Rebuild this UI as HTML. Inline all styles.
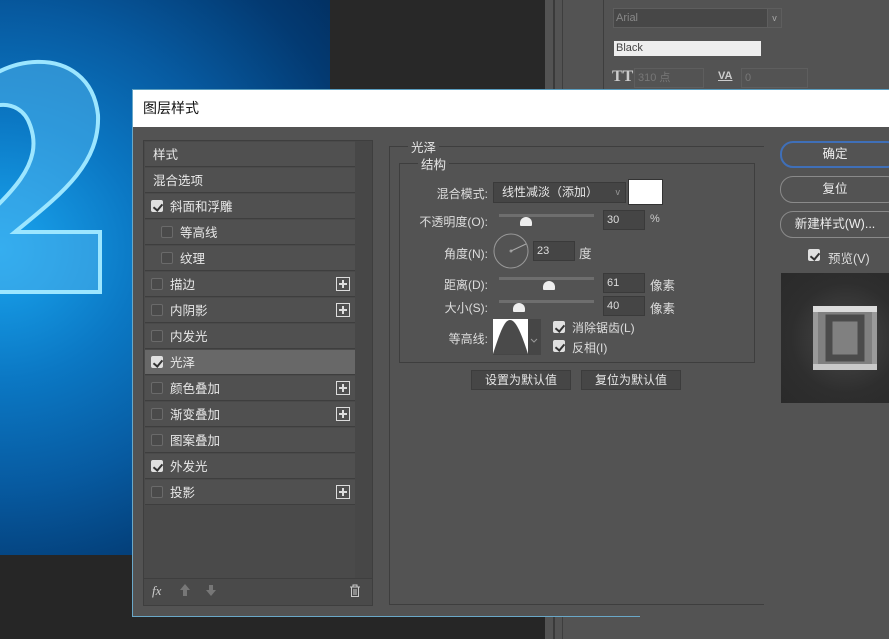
<!DOCTYPE html>
<html><head><meta charset="utf-8"><style>
*{margin:0;padding:0;box-sizing:border-box}
body{width:889px;height:639px;overflow:hidden;position:relative;background:#262626;font-family:"Liberation Sans","Noto Sans CJK SC",sans-serif;font-size:12px;color:#e6e6e6}
.a{position:absolute}
.row{position:absolute;left:145px;width:210px;height:25px;border-bottom:1px solid #3e3e3e;background:#505050;line-height:27px;font-size:12.5px;color:#e8e8e8}
.cb{position:absolute;width:12px;height:12px;border:1px solid #6a6a6a;border-radius:2px;background:#4a4a4a;top:6px}
.cb.on{background:#e0e0e0;border-color:#e0e0e0}
.cb.on:after{content:"";position:absolute;left:3px;top:1px;width:4px;height:7px;border:solid #333;border-width:0 2px 2px 0;transform:rotate(40deg)}
.plus{position:absolute;left:191px;top:5px;width:14px;height:14px;border:1px solid #ddd}
.plus:before{content:"";position:absolute;left:2px;top:5px;width:8px;height:2px;background:#ddd}
.plus:after{content:"";position:absolute;left:5px;top:2px;width:2px;height:8px;background:#ddd}
.lbl{position:absolute;text-align:right;width:90px;font-size:12px;color:#ddd}
.inp{position:absolute;background:#454545;border:1px solid #3a3a3a;color:#ddd;font-size:11px;padding-left:3px;line-height:18px;height:20px}
.sl{position:absolute;height:3px;background:#6e6e6e;width:95px;left:499px}
.th{position:absolute;width:12px;height:9px;background:#eee;border-radius:6px 6px 1px 1px}
.btn{position:absolute;left:780px;width:120px;height:27px;border:1px solid #8a8a8a;border-radius:13px;text-align:center;line-height:25px;font-size:12.5px;color:#eee;padding-right:10px}
.b2{position:absolute;height:20px;background:#464646;border:1px solid #3c3c3c;text-align:center;line-height:18px;font-size:12px;color:#e6e6e6}
</style></head><body>
<div class="a" style="left:0;top:0;width:330px;height:555px;background:radial-gradient(ellipse at 0% 45%,#1aa6f0 0%,#0b78c4 30%,#075aa0 55%,#033a72 80%,#022a58 100%)"></div>
<svg class="a" style="left:0;top:0" width="330" height="555">
<path d="M-40 110 C-10 50 90 40 98 115 C100 165 60 195 15 232 L100 232 L100 292 L-40 292 L-40 240 C10 195 45 165 30 125 C20 95 -20 100 -30 130 Z" fill="#4cb4ee" fill-opacity="0.55" stroke="#9ce6ff" stroke-width="4"/>
</svg>
<div class="a" style="left:330px;top:0;width:215px;height:555px;background:#282828"></div>
<div class="a" style="left:545px;top:0;width:344px;height:639px;background:#535353"></div>
<div class="a" style="left:553px;top:0;width:2px;height:639px;background:#3a3a3a"></div>
<div class="a" style="left:562px;top:0;width:1px;height:639px;background:#3e3e3e"></div>
<div class="a" style="left:603px;top:0;width:1px;height:89px;background:#3e3e3e"></div>
<div class="a" style="left:613px;top:8px;width:155px;height:20px;background:#474747;border:1px solid #5e5e5e;color:#888;font-size:11px;padding-left:2px;line-height:18px">Arial</div>
<div class="a" style="left:767px;top:8px;width:15px;height:20px;border:1px solid #5e5e5e;color:#aaa;font-size:9px;text-align:center;line-height:18px">v</div>
<div class="a" style="left:614px;top:41px;width:147px;height:15px;background:#eee;color:#444;font-size:11px;padding-left:2px;line-height:15px">Black</div>
<div class="a" style="left:612px;top:68px;font:bold 16px 'Liberation Serif',serif;color:#ccc">TT</div>
<div class="a" style="left:634px;top:68px;width:70px;height:20px;border:1px solid #5e5e5e;color:#777;font-size:11px;padding-left:3px;line-height:18px">310 点</div>
<div class="a" style="left:718px;top:70px;font:bold 11px 'Liberation Sans';color:#ccc;text-decoration:underline">VA</div>
<div class="a" style="left:741px;top:68px;width:67px;height:20px;border:1px solid #5e5e5e;color:#777;font-size:11px;padding-left:3px;line-height:18px">0</div>

<div class="a" style="left:132px;top:89px;width:757px;height:528px;background:#535353;border-top:1px solid #5a9ec0;border-left:1px solid #6aa8c8"></div>
<div class="a" style="left:640px;top:605px;width:249px;height:34px;background:#535353"></div>
<div class="a" style="left:133px;top:90px;width:756px;height:37px;background:#fff;color:#111;font-size:14px;line-height:37px;padding-left:10px">图层样式</div>
<div class="a" style="left:132px;top:616px;width:508px;height:1px;background:#6aa8c8"></div>

<div class="a" style="left:143px;top:140px;width:230px;height:466px;border:1px solid #3e3e3e;background:#4a4a4a"></div>
<div class="a" style="left:355px;top:141px;width:17px;height:437px;background:#474747"></div>
<div class="row" style="top:142px;padding-left:8px">样式</div>
<div class="row" style="top:168px;padding-left:8px">混合选项</div>
<div class="row" style="top:194px;padding-left:25px"><span class="cb on" style="left:6px"></span>斜面和浮雕</div>
<div class="row" style="top:220px;padding-left:35px"><span class="cb" style="left:16px"></span>等高线</div>
<div class="row" style="top:246px;padding-left:35px"><span class="cb" style="left:16px"></span>纹理</div>
<div class="row" style="top:272px;padding-left:25px"><span class="cb" style="left:6px"></span>描边<span class="plus"></span></div>
<div class="row" style="top:298px;padding-left:25px"><span class="cb" style="left:6px"></span>内阴影<span class="plus"></span></div>
<div class="row" style="top:324px;padding-left:25px"><span class="cb" style="left:6px"></span>内发光</div>
<div class="row" style="top:350px;padding-left:25px;background:#686868"><span class="cb on" style="left:6px"></span>光泽</div>
<div class="row" style="top:376px;padding-left:25px"><span class="cb" style="left:6px"></span>颜色叠加<span class="plus"></span></div>
<div class="row" style="top:402px;padding-left:25px"><span class="cb" style="left:6px"></span>渐变叠加<span class="plus"></span></div>
<div class="row" style="top:428px;padding-left:25px"><span class="cb" style="left:6px"></span>图案叠加</div>
<div class="row" style="top:454px;padding-left:25px"><span class="cb on" style="left:6px"></span>外发光</div>
<div class="row" style="top:480px;padding-left:25px"><span class="cb" style="left:6px"></span>投影<span class="plus"></span></div>
<div class="a" style="left:144px;top:578px;width:228px;height:1px;background:#3e3e3e"></div>
<div class="a" style="left:152px;top:583px;font:italic 13px 'Liberation Serif',serif;color:#ccc">fx</div>
<div class="a" style="left:180px;top:584px;width:0;height:0;border:5px solid transparent;border-bottom:6px solid #777;border-top:0"></div>
<div class="a" style="left:183px;top:590px;width:4px;height:6px;background:#777"></div>
<div class="a" style="left:209px;top:585px;width:4px;height:6px;background:#777"></div>
<div class="a" style="left:206px;top:590px;width:0;height:0;border:5px solid transparent;border-top:6px solid #777;border-bottom:0"></div>
<svg class="a" style="left:349px;top:584px" width="12" height="14"><path d="M1 3h10M4 3V1h4v2M2.5 3.5v9h7v-9M5 5v6M7 5v6" stroke="#ccc" fill="none"/></svg>

<div class="a" style="left:389px;top:146px;width:375px;height:459px;border:1px solid #3e3e3e;border-right:0"></div>
<div class="a" style="left:408px;top:137px;background:#535353;padding:0 3px;font-size:12.5px">光泽</div>
<div class="a" style="left:399px;top:163px;width:356px;height:200px;border:1px solid #3e3e3e"></div>
<div class="a" style="left:418px;top:154px;background:#535353;padding:0 3px;font-size:12.5px">结构</div>
<div class="lbl" style="left:398px;top:185px">混合模式:</div>
<div class="a" style="left:493px;top:182px;width:133px;height:21px;background:#454545;border:1px solid #3a3a3a;font-size:12px;line-height:19px;padding-left:8px">线性减淡（添加）<span style="position:absolute;right:5px;color:#999;font-size:9px">v</span></div>
<div class="a" style="left:628px;top:179px;width:35px;height:26px;background:#fff;border:1px solid #333"></div>
<div class="lbl" style="left:398px;top:213px">不透明度(O):</div>
<div class="sl" style="top:214px"></div><div class="th" style="left:520px;top:217px"></div>
<div class="inp" style="left:603px;top:210px;width:42px">30</div>
<div class="a" style="left:650px;top:213px;font-size:11px;color:#ccc">%</div>
<div class="lbl" style="left:398px;top:245px">角度(N):</div>
<svg class="a" style="left:492px;top:232px" width="38" height="38"><circle cx="19" cy="19" r="17" fill="none" stroke="#999"/><circle cx="19" cy="19" r="1.5" fill="#999"/><path d="M19 19 L34 12" stroke="#aaa"/></svg>
<div class="inp" style="left:533px;top:241px;width:42px">23</div>
<div class="a" style="left:579px;top:243px;font-size:12.5px;color:#ddd">度</div>
<div class="lbl" style="left:398px;top:276px">距离(D):</div>
<div class="sl" style="top:277px"></div><div class="th" style="left:543px;top:281px"></div>
<div class="inp" style="left:603px;top:273px;width:42px">61</div>
<div class="a" style="left:650px;top:275px;font-size:12.5px;color:#ddd">像素</div>
<div class="lbl" style="left:398px;top:299px">大小(S):</div>
<div class="sl" style="top:300px"></div><div class="th" style="left:513px;top:303px"></div>
<div class="inp" style="left:603px;top:296px;width:42px">40</div>
<div class="a" style="left:650px;top:298px;font-size:12.5px;color:#ddd">像素</div>
<div class="lbl" style="left:398px;top:330px">等高线:</div>
<svg class="a" style="left:493px;top:319px" width="48" height="36"><rect x="0" y="0" width="48" height="36" fill="#464646"/><rect x="0" y="0" width="35" height="35" fill="#fff"/><path d="M0 35 C8 10 12 1 17 1 C22 1 27 10 35 35 Z" fill="#4a4a4a"/><path d="M38 20l3 3 3-3" stroke="#999" fill="none"/></svg>
<span class="cb on a" style="left:553px;top:321px"></span>
<div class="a" style="left:572px;top:319px;font-size:12px;color:#ddd">消除锯齿(L)</div>
<span class="cb on a" style="left:553px;top:340px"></span>
<div class="a" style="left:572px;top:339px;font-size:12px;color:#ddd">反相(I)</div>
<div class="b2" style="left:471px;top:370px;width:100px">设置为默认值</div>
<div class="b2" style="left:581px;top:370px;width:100px">复位为默认值</div>

<div class="btn" style="top:141px;border:2px solid #3f6fb8;line-height:23px">确定</div>
<div class="btn" style="top:176px">复位</div>
<div class="btn" style="top:211px">新建样式(W)...</div>
<span class="cb on a" style="left:808px;top:249px"></span>
<div class="a" style="left:828px;top:248px;font-size:12.5px;color:#ddd">预览(V)</div>
<div class="a" style="left:781px;top:273px;width:108px;height:130px;background:radial-gradient(ellipse at 60% 50%,#4a4a4a 0%,#2e2e2e 60%,#2a2a2a 100%)"></div>
<svg class="a" style="left:813px;top:306px" width="64" height="64"><rect width="64" height="64" fill="#9a9a9a"/><rect x="5" y="5" width="54" height="54" fill="#808080"/><rect x="16" y="12" width="32" height="40" fill="none" stroke="#3a3a3a" stroke-width="7" opacity="0.75"/><rect x="0" y="0" width="64" height="6" fill="#ddd"/><rect x="0" y="58" width="64" height="6" fill="#c8c8c8"/></svg>
</body></html>
